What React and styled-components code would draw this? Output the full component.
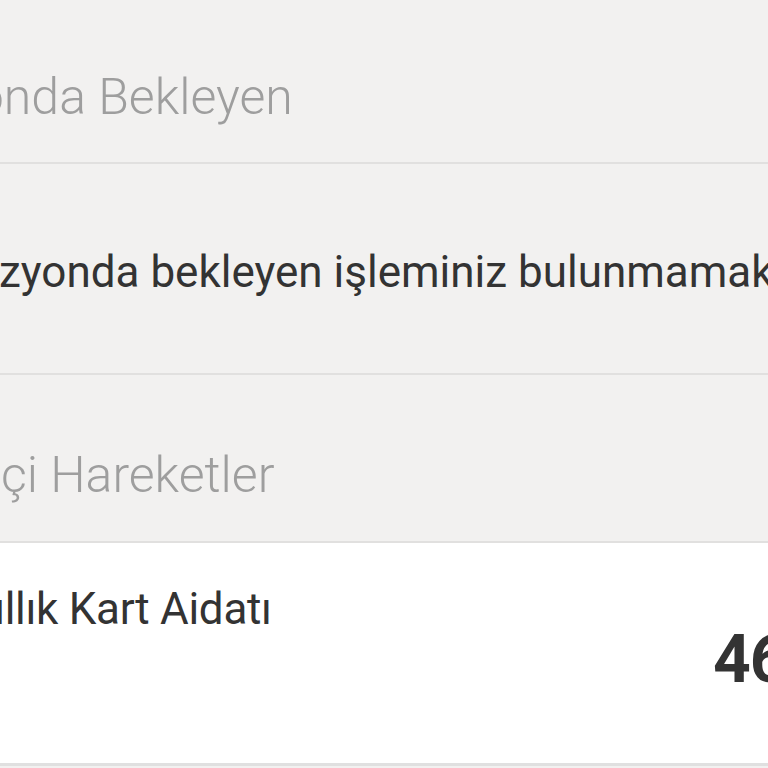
import React from "react";
import styled, { createGlobalStyle } from "styled-components";

const Global = createGlobalStyle`
  html, body { margin: 0; padding: 0; background: #f2f1f0; }
  body { font-family: Roboto, "Noto Sans", sans-serif; }
`;

const Screen = styled.div`
  width: 768px;
  height: 768px;
  overflow: hidden;
  display: flex;
  flex-direction: column;
  background: #f2f1f0;
`;

const SectionHeader = styled.div`
  height: ${(p) => p.$h}px;
  box-sizing: border-box;
  border-bottom: 2px solid #e1e0df;
  display: flex;
  align-items: flex-start;
  padding-top: ${(p) => p.$pt}px;
  flex-shrink: 0;
`;

const HeaderText = styled.div`
  font-family: Roboto, sans-serif;
  font-weight: 300;
  font-size: 50px;
  line-height: 1;
  color: #9e9e9e;
  white-space: nowrap;
  margin-left: ${(p) => p.$shift}px;
`;

const MessageRow = styled.div`
  height: 211px;
  box-sizing: border-box;
  border-bottom: 2px solid #e1e0df;
  padding-top: 86px;
  flex-shrink: 0;
`;

const MessageText = styled.div`
  font-family: Roboto, sans-serif;
  font-size: 44px;
  line-height: 1;
  color: #333333;
  white-space: nowrap;
  margin-left: ${(p) => p.$shift}px;
`;

const TxRow = styled.div`
  background: #ffffff;
  height: 223px;
  box-sizing: border-box;
  border-bottom: 3px solid #e0e0e0;
  display: flex;
  flex-direction: column;
  padding-top: 44px;
  flex-shrink: 0;
`;

const TxTitle = styled.div`
  font-family: Roboto, sans-serif;
  font-size: 44px;
  line-height: 1;
  letter-spacing: -0.3px;
  color: #333333;
  white-space: nowrap;
  margin-left: ${(p) => p.$shift}px;
`;

const TxAmount = styled.div`
  align-self: flex-start;
  margin-left: 713px;
  margin-top: -4px;
  font-family: Roboto, sans-serif;
  font-weight: 700;
  font-size: 66px;
  line-height: 1;
  letter-spacing: -1px;
  color: #333333;
  white-space: nowrap;
`;

export default function App() {
  return (
    <>
      <Global />
      <Screen>
        <SectionHeader $h={164} $pt={72}>
          <HeaderText $shift={-182}>Provizyonda Bekleyen</HeaderText>
        </SectionHeader>
        <MessageRow>
          <MessageText $shift={-100}>
            Provizyonda bekleyen işleminiz bulunmamaktadır.
          </MessageText>
        </MessageRow>
        <SectionHeader $h={168} $pt={75}>
          <HeaderText $shift={-183}>Dönem İçi Hareketler</HeaderText>
        </SectionHeader>
        <TxRow>
          <TxTitle $shift={-32}>Yıllık Kart Aidatı</TxTitle>
          <TxAmount>46,00 TL</TxAmount>
        </TxRow>
      </Screen>
    </>
  );
}
